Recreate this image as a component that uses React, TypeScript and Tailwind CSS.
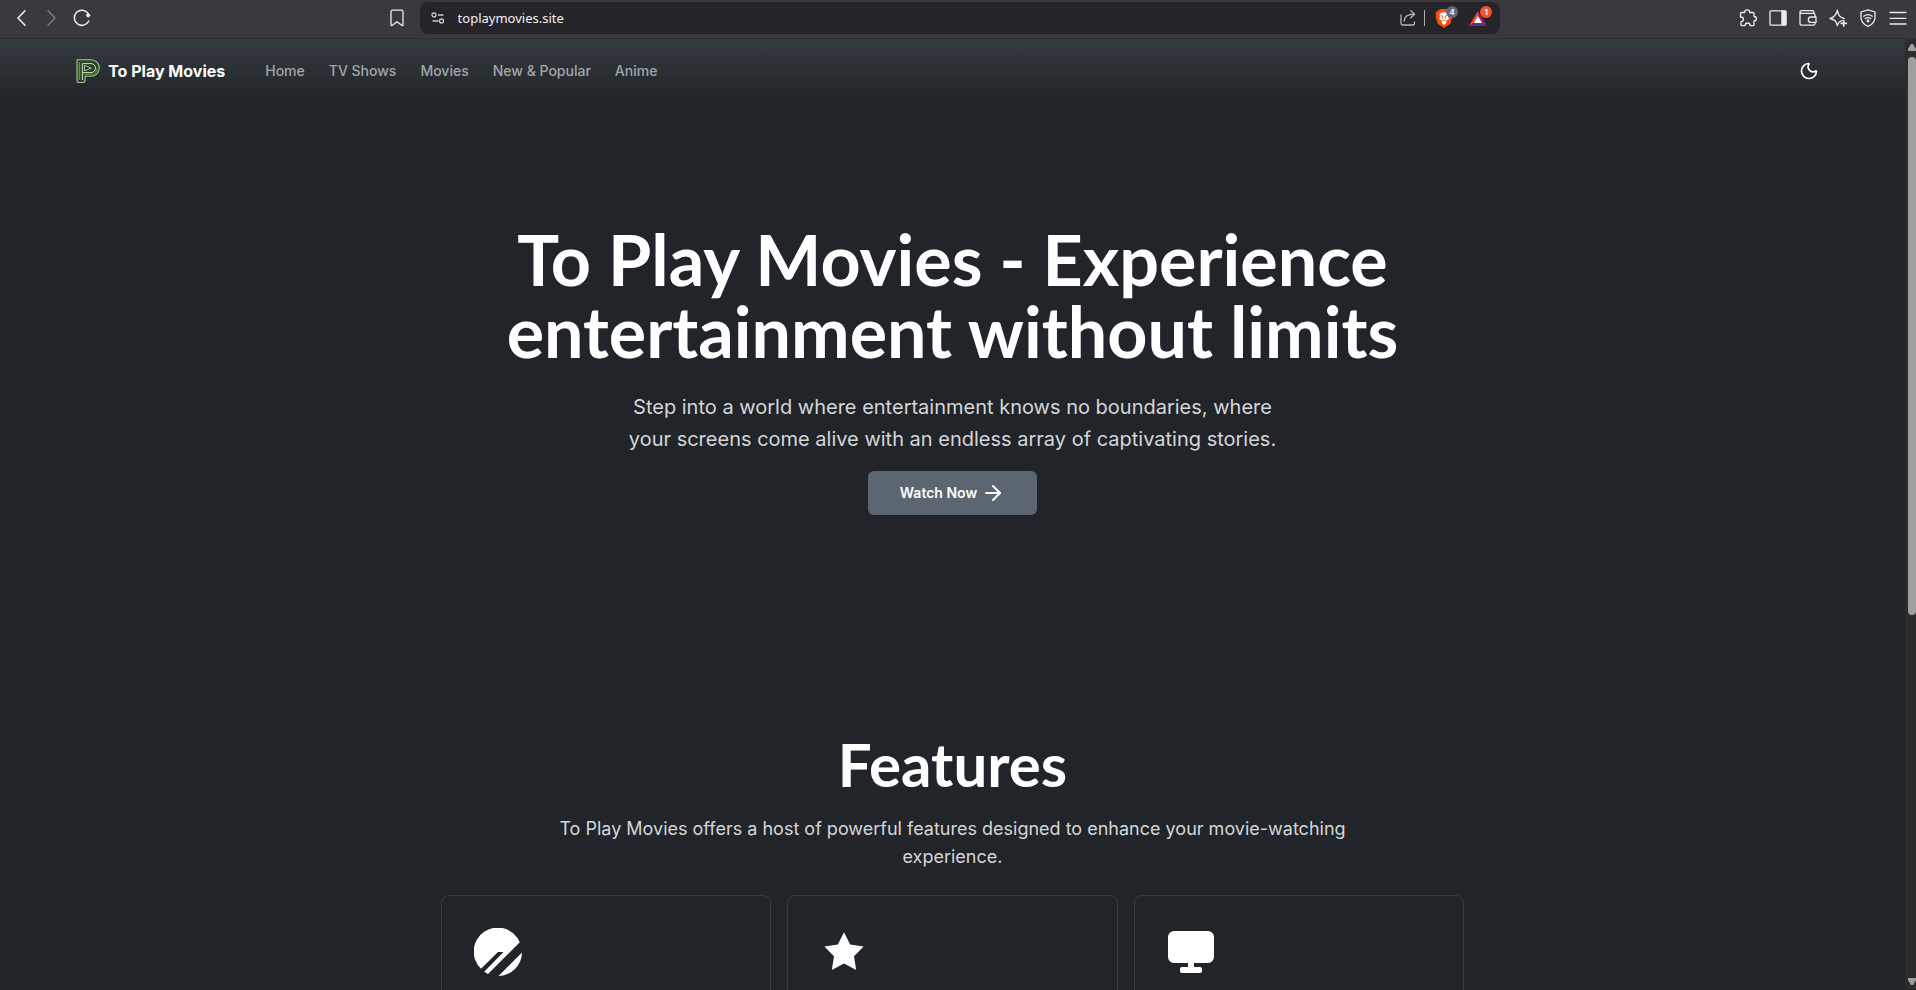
import React from "react";
import { ArrowRight, Moon } from "lucide-react";

type IconProps = { children: React.ReactNode; className?: string; box?: string };

function Line({ children, className = "size-5", box = "0 0 20 20" }: IconProps) {
  return (
    <svg
      viewBox={box}
      className={className}
      fill="none"
      stroke="currentColor"
      strokeWidth="1.3"
      strokeLinecap="round"
      strokeLinejoin="round"
      aria-hidden="true"
    >
      {children}
    </svg>
  );
}

function ToolButton({ label, children, className = "text-[#ececf0]" }: { label: string; children: React.ReactNode; className?: string }) {
  return (
    <button type="button" aria-label={label} className={`flex size-[30px] items-center justify-center ${className}`}>
      {children}
    </button>
  );
}

function BrowserBar() {
  return (
    <div className="grid h-[39px] shrink-0 grid-cols-[22fr_56.4%_21.8fr] items-start border-b border-[#2f2e30] bg-[#3b393f] pt-[3px]">
      <div className="flex items-center justify-between pr-2 pl-[7px]">
        <div className="flex">
          <ToolButton label="Back">
            <Line><path d="M13 2.800 6 10l7 7.200" strokeWidth="1.6" /></Line>
          </ToolButton>
          <ToolButton label="Forward" className="text-[#838187]">
            <Line><path d="m6 2.800 7 7.200-7 7.200" /></Line>
          </ToolButton>
          <ToolButton label="Reload">
            <Line>
              <path d="M16.800 13A7.600 7.600 0 1 1 16.300 5.600" strokeWidth="1.5" />
              <circle cx="16.200" cy="7.300" r="1.600" fill="currentColor" strokeWidth="1" />
            </Line>
          </ToolButton>
        </div>
        <ToolButton label="Bookmark">
          <Line><path d="M5.500 2.200h9a1.500 1.500 0 0 1 1.500 1.500v13.600l-1 .3-5-3.800-5 3.800-1-.3V3.700a1.500 1.500 0 0 1 1.500-1.500Z" /></Line>
        </ToolButton>
      </div>

      <div className="-mt-px flex h-8 items-center gap-3 rounded-lg bg-[#252429] pl-[10px]">
        <button type="button" aria-label="Site settings" className="text-[#c9c8cd]">
          <Line className="size-4" box="0 0 16 16">
            <circle cx="4" cy="5" r="2" />
            <path d="M8.500 5h4.500M3 11h5" />
            <circle cx="11.500" cy="11" r="2" />
          </Line>
        </button>
        <input
          type="text"
          aria-label="Address"
          defaultValue="toplaymovies.site"
          className="min-w-0 flex-1 bg-transparent font-['Noto_Sans',sans-serif] text-[13px] leading-5 text-[#f2f2f4] outline-none"
        />
        <div className="flex items-center">
          <button type="button" aria-label="Share" className="text-[#b7b6bb]">
            <Line className="size-[18px]" box="0 0 18 18">
              <path d="M2 6v8.500a1.500 1.500 0 0 0 1.500 1.500h10.500a1.500 1.500 0 0 0 1.500-1.500V13" />
              <path d="M5.200 12c.3-4.500 3-6.800 10-6.800M11.800 1.800l3.800 3.400-3.800 3.600" />
            </Line>
          </button>
          <span className="mx-[7px] h-4 w-px bg-[#aaa9ae]" />
          <button type="button" aria-label="Shields" className="relative flex h-8 w-[34px] items-center pl-[3px]">
            <svg viewBox="0 0 18 20" className="h-5 w-[18px]" aria-hidden="true">
              <path d="M5 1h8l2 2 1.500.2 1 2.300-.6 1.800.4 1.500-2 7L9 20l-6.300-4.200-2-7 .4-1.500-.6-1.800 1-2.300L3 3Z" fill="#f5500e" />
              <path d="m9 4.600 2.200-.4 2.600 2.500-.8 1.800 1 2-2.300 2-1 .3 1 1.700L9 16.900l-2.700-2.400 1-1.700-1-.3-2.300-2 1-2-.8-1.800 2.600-2.500Z" fill="#fff" />
              <path d="m5.600 7.600 2.300.5-.6 2.600M12.400 7.600l-2.300.5.6 2.600M7.500 12.700 9 12l1.500.7" fill="none" stroke="#f5500e" strokeWidth=".9" />
            </svg>
            <span className="absolute top-1 right-2 flex size-3 items-center justify-center rounded-full bg-[#636575] font-['Inter',sans-serif] text-[8px] leading-3 font-semibold text-white">4</span>
          </button>
          <button type="button" aria-label="Rewards" className="relative flex h-8 w-[34px] items-center pl-[3px]">
            <svg viewBox="0 0 18 18" className="size-[18px]" aria-hidden="true">
              <path d="M9 2v5.500l-4 6L0 17Z" fill="#ff4724" />
              <path d="m9 2 9 15-5-3.500-4-6Z" fill="#9e1f63" />
              <path d="m0 17 5-3.500h8l5 3.500Z" fill="#662d91" />
              <path d="m9 7 4.200 7H4.800Z" fill="#fff" />
            </svg>
            <span className="absolute top-1 right-2 flex size-3 items-center justify-center rounded-full bg-[#f9502c] font-['Inter',sans-serif] text-[8px] leading-3 font-semibold text-white">1</span>
          </button>
        </div>
      </div>

      <div className="flex justify-end pr-[3px]">
        <ToolButton label="Extensions">
          <Line><path d="M3.500 4.500h3.200c-.2-1.700.9-2.700 2.500-2.700s2.700 1 2.500 2.700H15a1 1 0 0 1 1 1v3c1.500 0 2.400 1 2.400 2.300S17.500 13 16 13v3.700a1 1 0 0 1-1 1h-2.800c-.2-1.700-1.200-2.700-2.600-2.700S7.200 16 7 17.700H4a1 1 0 0 1-1-1v-3c1.700 0 2.500-1.100 2.500-2.400S4.500 9 2.500 9V5.500a1 1 0 0 1 1-1Z" /></Line>
        </ToolButton>
        <ToolButton label="Sidebar">
          <Line><rect x="2" y="2.800" width="16" height="14.400" rx="1" /><path d="M14 3h4v14h-4Z" fill="currentColor" strokeWidth=".8" /></Line>
        </ToolButton>
        <ToolButton label="Wallet">
          <Line>
            <path d="M15.700 5V3.500A1.200 1.200 0 0 0 14.500 2.600H3.500A1.500 1.500 0 0 0 2 4.100v11.400A1.700 1.700 0 0 0 3.700 17.200h11.600a1.700 1.700 0 0 0 1.700-1.700M2 4.100A1.400 1.400 0 0 0 3.500 5.300h11.800A1.700 1.700 0 0 1 17 7v2" />
            <path d="M18 9h-5a2.700 2.700 0 0 0 0 5.400h5Z" />
          </Line>
        </ToolButton>
        <ToolButton label="Assistant">
          <Line>
            <path d="M14 12.500c-3 .9-3.900 2.300-4.700 5-1-4.400-2.500-5.800-7.300-7 4.800-1.200 6.300-3.600 7.300-8.300.9 4.700 2 7.100 6.700 8.300" />
            <path d="M15.700 12.700v5.200M13.100 15.300h5.200" strokeWidth="1.7" />
          </Line>
        </ToolButton>
        <ToolButton label="VPN">
          <Line>
            <path d="M10 1.800 17 4v5c0 4.500-2.500 7.500-7 9.300C5.500 16.500 3 13.500 3 9V4Z" />
            <path d="M5.800 8.200c2.600-2 5.800-2 8.400 0M7.300 10.600c1.600-1.200 3.800-1.200 5.400 0" />
            <circle cx="10" cy="13" r=".8" fill="currentColor" />
          </Line>
        </ToolButton>
        <ToolButton label="Menu">
          <Line><path d="M2 4.500h16M2 10.300h16M2 16h16" /></Line>
        </ToolButton>
      </div>
    </div>
  );
}

function Logo() {
  return (
    <svg viewBox="0 0 24 24" className="size-6" fill="none" aria-hidden="true">
      <path d="M1 1.500Q1 .7 2 .7H15a8.300 8.300 0 0 1 0 16.600H9v4.200a2 2 0 0 1-2 2H3a2 2 0 0 1-2-2Z" fill="#28431f" stroke="#a9bf9c" strokeWidth="1.100" />
      <path d="M3.400 3.200V21" stroke="#5c9440" strokeWidth="1.600" />
      <path d="M6.400 21V4.600H15a4.500 4.500 0 0 1 0 9H6.400" stroke="#d3dccb" strokeWidth="1" />
      <path d="M8.500 15.500H15a6.500 6.500 0 0 0 6-6" stroke="#588b3e" strokeWidth="1.400" />
      <path d="m8.500 6.500 6.800 2.600-6.800 2.700Z" fill="#202a22" stroke="#b3c5a9" strokeWidth="1" />
    </svg>
  );
}

const links = ["Home", "TV Shows", "Movies", "New & Popular", "Anime"];

function Header() {
  return (
    <header className="flex h-16 items-center justify-between bg-linear-to-b from-[#343a40] to-[#212529] px-[4%]">
      <div className="flex items-center gap-10">
        <a href="#" className="flex items-center gap-2 text-base font-bold text-white">
          <Logo />
          To Play Movies
        </a>
        <nav className="flex gap-6">
          {links.map((link) => (
            <a key={link} href="#" className="text-sm font-medium text-[#a3a6a8]">
              {link}
            </a>
          ))}
        </nav>
      </div>
      <button type="button" aria-label="Toggle theme" className="flex size-10 items-center justify-center text-white">
        <Moon className="size-5" />
      </button>
    </header>
  );
}

function OrbitIcon() {
  return (
    <svg viewBox="0 0 48 48" className="size-12" fill="currentColor" aria-hidden="true">
      <path d="M7 40.800A24 24 0 1 1 45.800 14.200L14 46 10.200 43.700 29.500 24H24Z" />
      <path d="M48 24.500A24 24 0 0 1 24.500 48Z" />
    </svg>
  );
}

function StarIcon() {
  return (
    <svg viewBox="0 0 48 48" className="size-12" fill="currentColor" aria-hidden="true">
      <path d="m24 4.200 6.200 12.400 13.400 2-9.600 9.700 2.200 13.800L24 35.600l-12.200 6.500L14 28.300l-9.600-9.700 13.400-2Z" />
    </svg>
  );
}

function ScreenIcon() {
  return (
    <svg viewBox="0 0 48 48" className="size-12" fill="currentColor" aria-hidden="true">
      <path d="M7 3h34a6 6 0 0 1 6 6v20a6 6 0 0 1-6 6H27v4h6a2 2 0 0 1 2 2v2a2 2 0 0 1-2 2H15a2 2 0 0 1-2-2v-2a2 2 0 0 1 2-2h6v-4H7a6 6 0 0 1-6-6V9a6 6 0 0 1 6-6Z" />
    </svg>
  );
}

function Scrollbar() {
  return (
    <div className="flex w-[11px] shrink-0 flex-col items-end bg-[#2c2c2c] pt-1 pb-1 text-[#9f9f9f]" aria-hidden="true">
      <svg viewBox="0 0 8 8" className="size-2" fill="currentColor"><path d="M0 8V6l3-5h2l3 5v2Z" /></svg>
      <div className="flex w-full flex-1 flex-col items-end py-[6px]">
        <div className="h-[61%] w-2 rounded-t rounded-b bg-[#9f9f9f]" />
      </div>
      <svg viewBox="0 0 8 8" className="size-2" fill="currentColor"><path d="M0 0v2l3 5h2l3-5V0Z" /></svg>
    </div>
  );
}

export default function App() {
  return (
    <div className="flex h-screen flex-col bg-[#212529] font-['Inter',sans-serif]">
      <BrowserBar />
      <div className="flex min-h-0 flex-1">
        <div className="min-w-0 flex-1 overflow-hidden">
          <Header />
          <main>
            <section className="mx-auto flex max-w-5xl flex-col items-center pt-[120px] pb-48 text-center">
              <h1 className="font-['Lato',sans-serif] text-[70px] leading-[72px] font-bold text-white">
                To Play Movies - Experience
                <br />
                entertainment without limits
              </h1>
              <p className="mt-6 max-w-2xl text-xl leading-8 text-[#d4d6d8]">
                Step into a world where entertainment knows no boundaries, where your screens come alive with an endless array of captivating stories.
              </p>
              <a href="#" className="mt-4 flex h-11 items-center gap-1 rounded-md bg-[#5c6670] px-8 text-sm font-semibold text-white">
                Watch Now
                <ArrowRight className="size-6" />
              </a>
            </section>
            <section className="mx-auto flex max-w-5xl flex-col items-center text-center">
              <h2 className="mt-6 font-['Lato',sans-serif] text-[60px] leading-[66px] font-bold text-white">Features</h2>
              <p className="mt-[18px] max-w-[870px] text-lg leading-7 text-[#d4d6d8]">
                To Play Movies offers a host of powerful features designed to enhance your movie-watching experience.
              </p>
              <div className="mt-6 grid w-full grid-cols-3 gap-4 text-white">
                {[OrbitIcon, StarIcon, ScreenIcon].map((Icon, i) => (
                  <div key={i} className="h-[180px] rounded-lg border border-[#373c43] p-8">
                    <Icon />
                  </div>
                ))}
              </div>
            </section>
          </main>
        </div>
        <Scrollbar />
      </div>
    </div>
  );
}
